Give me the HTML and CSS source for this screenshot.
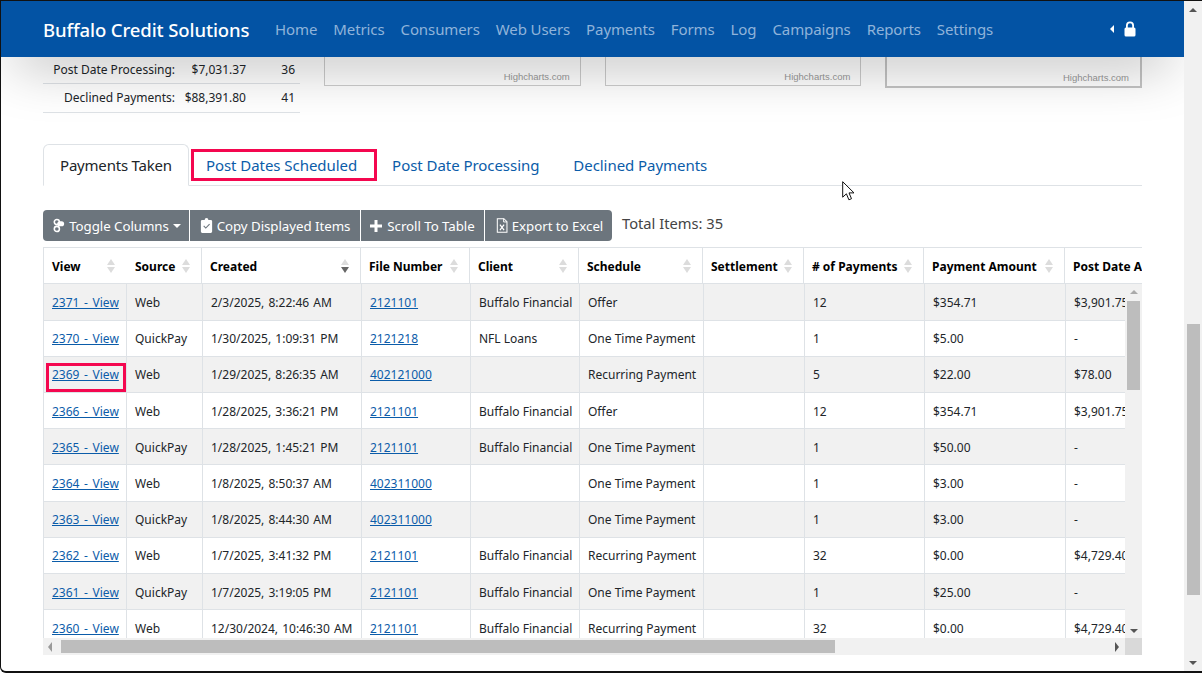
FILE: index.html
```html
<!DOCTYPE html>
<html lang="en">
<head>
<meta charset="utf-8">
<title>Buffalo Credit Solutions</title>
<link rel="stylesheet" href="styles.css">
</head>
<body>
<div class="window">
  <div class="viewport">
    <header class="topbar">
      <a class="brand" href="#">Buffalo Credit Solutions</a>
      <nav class="nav">
        <a href="#">Home</a><a href="#">Metrics</a><a href="#">Consumers</a><a href="#">Web Users</a><a href="#">Payments</a><a href="#">Forms</a><a href="#">Log</a><a href="#">Campaigns</a><a href="#">Reports</a><a href="#">Settings</a>
      </nav>
      <div class="userbox">
        <span class="caret-left"></span>
        <svg class="lock" viewBox="0 0 12 16" width="12" height="16"><path d="M2 7V4.5a4 4 0 0 1 8 0V7h-1.8V4.5a2.2 2.2 0 0 0-4.4 0V7z" fill="#fff"/><rect x="0.5" y="6.5" width="11" height="9" rx="1.5" fill="#fff"/></svg>
      </div>
    </header>
    <main class="page">
      <section class="summary">
        <table class="stats">
          <tr class="stats-first"><td class="s-label">Post Date Processing:</td><td class="s-amt">$7,031.37</td><td class="s-num">36</td></tr>
          <tr><td class="s-label">Declined Payments:</td><td class="s-amt">$88,391.80</td><td class="s-num">41</td></tr>
        </table>
        <div class="charts">
          <div class="chart"><span>Highcharts.com</span></div>
          <div class="chart"><span>Highcharts.com</span></div>
          <div class="chart chart-focus"><span>Highcharts.com</span></div>
        </div>
      </section>
      <ul class="tabs">
        <li class="tab active"><a href="#">Payments Taken</a></li>
        <li class="tab marked"><a href="#">Post Dates Scheduled</a></li>
        <li class="tab"><a href="#">Post Date Processing</a></li>
        <li class="tab"><a href="#">Declined Payments</a></li>
      </ul>
      <div class="toolbar">
        <div class="btn-group">
          <button class="btn b1"><svg viewBox="0 0 14 16" width="12" height="15"><circle cx="4.5" cy="4" r="3" fill="none" stroke="#fff" stroke-width="1.8"/><circle cx="4.5" cy="12" r="3" fill="none" stroke="#fff" stroke-width="1.8"/><rect x="5" y="3" width="8" height="6" rx="3" fill="#fff"/></svg>Toggle Columns<span class="caret-down"></span></button>
          <button class="btn b2"><svg viewBox="0 0 12 16" width="13" height="15"><path d="M1.5 2H4a2 2 0 0 1 4 0h2.5A1.5 1.5 0 0 1 12 3.5v11a1.5 1.5 0 0 1-1.5 1.5h-9A1.5 1.5 0 0 1 0 14.500v-11A1.500 1.500 0 0 1 1.500 2z" fill="#fff"/><path d="M3 8.500l2.200 2.200L9.300 6.500" fill="none" stroke="#6c757d" stroke-width="1.200"/></svg>Copy Displayed Items</button>
          <button class="btn b3"><svg viewBox="0 0 12 12" width="12" height="12"><path d="M4.500 0h3v4.500H12v3H7.500V12h-3V7.500H0v-3h4.500z" fill="#fff"/></svg>Scroll To Table</button>
          <button class="btn b4"><svg viewBox="0 0 12 16" width="12" height="15"><path d="M1 .7h7l3.300 3.300v11.300H1z" fill="none" stroke="#fff" stroke-width="1.100"/><path d="M7.700 .7v3.500h3.600" fill="none" stroke="#fff"/><path d="M3.800 7l4.400 6M8.200 7l-4.400 6" stroke="#fff" stroke-width="1.300"/></svg>Export to Excel</button>
        </div>
        <span class="total">Total Items: 35</span>
      </div>
      <div class="grid">
        <table class="head">
          <colgroup><col class="c1"><col class="c2"><col class="c3"><col class="c4"><col class="c5"><col class="c6"><col class="c7"><col class="c8"><col class="c9"><col class="c10"></colgroup>
          <tr>
            <th class="nosep"><div class="th">View<span class="sort"><i class="up"></i><i class="dn"></i></span></div></th>
            <th><div class="th">Source<span class="sort"><i class="up"></i><i class="dn"></i></span></div></th>
            <th><div class="th">Created<span class="sort"><i class="up"></i><i class="dn on"></i></span></div></th>
            <th><div class="th">File Number<span class="sort"><i class="up"></i><i class="dn"></i></span></div></th>
            <th><div class="th">Client<span class="sort"><i class="up"></i><i class="dn"></i></span></div></th>
            <th><div class="th">Schedule<span class="sort"><i class="up"></i><i class="dn"></i></span></div></th>
            <th><div class="th">Settlement<span class="sort"><i class="up"></i><i class="dn"></i></span></div></th>
            <th><div class="th"># of Payments<span class="sort"><i class="up"></i><i class="dn"></i></span></div></th>
            <th><div class="th">Payment Amount<span class="sort"><i class="up"></i><i class="dn"></i></span></div></th>
            <th><div class="th">Post Date Amount</div></th>
          </tr>
        </table>
        <div class="body-clip">
          <table class="rows">
            <colgroup><col class="d1"><col class="d2"><col class="d3"><col class="d4"><col class="d5"><col class="d6"><col class="d7"><col class="d8"><col class="d9"><col class="d10"></colgroup>
            <tr><td><a href="#">2371 - View</a></td><td>Web</td><td>2/3/2025, 8:22:46 AM</td><td><a href="#">2121101</a></td><td>Buffalo Financial</td><td>Offer</td><td></td><td>12</td><td>$354.71</td><td>$3,901.75</td></tr>
            <tr><td><a href="#">2370 - View</a></td><td>QuickPay</td><td>1/30/2025, 1:09:31 PM</td><td><a href="#">2121218</a></td><td>NFL Loans</td><td>One Time Payment</td><td></td><td>1</td><td>$5.00</td><td>-</td></tr>
            <tr><td><a class="marked-link" href="#">2369 - View</a></td><td>Web</td><td>1/29/2025, 8:26:35 AM</td><td><a href="#">402121000</a></td><td></td><td>Recurring Payment</td><td></td><td>5</td><td>$22.00</td><td>$78.00</td></tr>
            <tr><td><a href="#">2366 - View</a></td><td>Web</td><td>1/28/2025, 3:36:21 PM</td><td><a href="#">2121101</a></td><td>Buffalo Financial</td><td>Offer</td><td></td><td>12</td><td>$354.71</td><td>$3,901.75</td></tr>
            <tr><td><a href="#">2365 - View</a></td><td>QuickPay</td><td>1/28/2025, 1:45:21 PM</td><td><a href="#">2121101</a></td><td>Buffalo Financial</td><td>One Time Payment</td><td></td><td>1</td><td>$50.00</td><td>-</td></tr>
            <tr><td><a href="#">2364 - View</a></td><td>Web</td><td>1/8/2025, 8:50:37 AM</td><td><a href="#">402311000</a></td><td></td><td>One Time Payment</td><td></td><td>1</td><td>$3.00</td><td>-</td></tr>
            <tr><td><a href="#">2363 - View</a></td><td>QuickPay</td><td>1/8/2025, 8:44:30 AM</td><td><a href="#">402311000</a></td><td></td><td>One Time Payment</td><td></td><td>1</td><td>$3.00</td><td>-</td></tr>
            <tr><td><a href="#">2362 - View</a></td><td>Web</td><td>1/7/2025, 3:41:32 PM</td><td><a href="#">2121101</a></td><td>Buffalo Financial</td><td>Recurring Payment</td><td></td><td>32</td><td>$0.00</td><td>$4,729.40</td></tr>
            <tr><td><a href="#">2361 - View</a></td><td>QuickPay</td><td>1/7/2025, 3:19:05 PM</td><td><a href="#">2121101</a></td><td>Buffalo Financial</td><td>One Time Payment</td><td></td><td>1</td><td>$25.00</td><td>-</td></tr>
            <tr><td><a href="#">2360 - View</a></td><td>Web</td><td>12/30/2024, 10:46:30 AM</td><td><a href="#">2121101</a></td><td>Buffalo Financial</td><td>Recurring Payment</td><td></td><td>32</td><td>$0.00</td><td>$4,729.40</td></tr>
          </table>
          <div class="vbar"><span class="tri-up"></span><span class="vthumb"></span><span class="tri-down bar-end"></span></div>
        </div>
        <div class="hbar"><span class="tri-left"></span><span class="hthumb"></span><span class="tri-right"></span><span class="corner"></span></div>
      </div>
    </main>
    <svg class="pointer" viewBox="0 0 13 20" width="13" height="20"><path d="M.7.700v15.500l3.700-3.400 2.500 6 2.600-1.100-2.500-5.800h5z" fill="#fff" stroke="#111" stroke-width="1"/></svg>
  </div>
  <div class="page-scroll"><span class="tri-up"></span><span class="pthumb"></span><span class="tri-down bar-end"></span></div>
</div>
</body>
</html>
```
FILE: styles.css
```css
* { box-sizing: border-box; }
html, body { margin: 0; height: 673px; overflow: hidden; background: #fff; }
body { font-family: "Noto Sans", "Open Sans", sans-serif; color: #212529; }
a { text-decoration: none; }

.window { display: flex; width: 1202px; height: 673px; border: 1px solid #111; border-width: 1px 0 2px 1px; border-bottom-left-radius: 6px; overflow: hidden; }
.viewport { position: relative; flex: 1; height: 670px; overflow: hidden; }
.page-scroll { width: 18px; background: #f1f1f1; display: flex; flex-direction: column; align-items: center; padding: 7px 0 6px; }
.pthumb { width: 13px; height: 271px; background: #bdbdbd; margin-top: 312px; }
.bar-end { margin-top: auto; }
.tri-up { width: 0; height: 0; border: 4px solid transparent; border-top: 0; border-bottom: 4px solid #555; }
.tri-down { width: 0; height: 0; border: 4px solid transparent; border-bottom: 0; border-top: 4px solid #555; }
.tri-left { width: 0; height: 0; border: 5px solid transparent; border-left: 0; border-right: 4px solid #9a9a9a; }
.tri-right { width: 0; height: 0; border: 5px solid transparent; border-right: 0; border-left: 4px solid #555; }

.topbar { position: relative; z-index: 3; height: 56px; background: #0353a4; display: flex; align-items: center; padding: 0 42px; box-shadow: 0 18px 55px -14px rgba(0,0,0,.38); }
.brand { color: #fff; font-size: 18.5px; font-weight: 500; letter-spacing: -.1px; width: 232px; white-space: nowrap; }
.nav { display: flex; gap: 16px; font-size: 15px; letter-spacing: -.1px; }
.nav a { color: #90b3da; white-space: nowrap; }
.userbox { margin-left: auto; display: flex; align-items: center; gap: 10px; padding-right: 6px; }
.caret-left { width: 0; height: 0; border: 4px solid transparent; border-left: 0; border-right: 4px solid #fff; }
.lock { display: block; }

.page { padding: 0 42px; }
.summary { display: flex; gap: 24px; height: 87px; }
.stats { border-collapse: collapse; width: 257px; height: 55px; font-size: 12px; flex: none; }
.stats td { border-bottom: 1px solid #dee2e6; padding: 0; height: 29px; white-space: nowrap; }
.stats-first td { height: 26px; }
.s-label { text-align: right; width: 132px; }
.s-amt { text-align: right; width: 71px; }
.s-num { text-align: right; padding-right: 5px !important; }
.charts { flex: 1; display: grid; grid-template-columns: repeat(3, 1fr); gap: 24px; height: 31px; align-items: start; }
.chart { border: 1px solid #ccc; border-top: 0; display: flex; justify-content: flex-end; align-items: flex-end; padding: 0 10px 3px; height: 29px; font: 9.5px "Liberation Sans", sans-serif; color: #999; }
.chart-focus { border-width: 0 2px 2px; border-color: #c4c4c4; height: 31px; padding: 0 11px 3px; }

.tabs { display: flex; list-style: none; margin: 0; padding: 0; height: 42px; border-bottom: 1px solid #dee2e6; }
.tab { height: 42px; display: flex; }
.tab a { display: flex; align-items: center; padding: 0 16px; color: #0b5ca9; font-size: 15px; letter-spacing: -.05px; white-space: nowrap; border: 1px solid transparent; }
.tab.active a { color: #212529; background: #fff; border-color: #dee2e6 #dee2e6 #fff; border-radius: 6px 6px 0 0; height: 42px; letter-spacing: -.2px; }
.tab.marked { margin-left: 4px; }
.tab.marked a { outline: 3px solid #f4074f; outline-offset: -1px; height: 28px; margin-top: 7px; padding: 0 17px 0 12px; }

.toolbar { display: flex; align-items: flex-start; margin-top: 24px; gap: 10px; }
.btn-group { display: flex; gap: 1px; }
.btn { display: flex; align-items: center; justify-content: center; gap: 4px; height: 31px; border: 0; background: #6c757d; color: #fff; font: 13.3px "Noto Sans", sans-serif; letter-spacing: -.05px; padding: 0; white-space: nowrap; }
.b1 { width: 146px; border-radius: 4px 0 0 4px; padding-left: 2px; }
.b2 { width: 170px; }
.b3 { width: 123px; gap: 5px; }
.b4 { width: 127px; border-radius: 0 4px 4px 0; padding-left: 2px; }
.caret-down { width: 0; height: 0; border: 4px solid transparent; border-bottom: 0; border-top: 4px solid #fff; margin-left: 0; }
.total { font-size: 14.7px; color: #444; line-height: 26px; }

.grid { position: relative; width: 1099px; margin-top: 6px; height: 408px; overflow: hidden; }
.head, .rows { table-layout: fixed; border-collapse: collapse; font-size: 12px; }
.head { width: 1204px; background: #fff; }
.head th { height: 36px; padding: 1px 0 0; border: 1px solid #dee2e6; text-align: left; color: #000; font-weight: 700; white-space: nowrap; overflow: hidden; }
.head th.nosep { border-right-color: transparent; }
.th { display: flex; justify-content: space-between; align-items: center; padding: 0 11px 0 8px; }
.sort { display: flex; flex-direction: column; gap: 2px; flex: none; }
.sort i { display: block; width: 0; height: 0; border: 4px solid transparent; }
.sort .up { border-top: 0; border-bottom: 6px solid #dcdcdc; }
.sort .dn { border-bottom: 0; border-top: 6px solid #dcdcdc; }
.sort .dn.on { border-top-color: #666; }

.c1 { width: 83px; } .c2 { width: 75px; } .c3 { width: 159px; } .c4 { width: 109px; } .c5 { width: 109px; }
.c6 { width: 124px; } .c7 { width: 101px; } .c8 { width: 120px; } .c9 { width: 141px; } .c10 { width: 183px; }
.d1 { width: 83px; } .d2 { width: 76px; } .d3 { width: 159px; } .d4 { width: 109px; } .d5 { width: 109px; }
.d6 { width: 124px; } .d7 { width: 101px; } .d8 { width: 120px; } .d9 { width: 141px; } .d10 { width: 182px; }

.body-clip { position: relative; height: 354px; width: 1099px; overflow: hidden; }
.rows { width: 1204px; }
.rows td { height: 36.200px; padding: 1px 8px 0; border: 1px solid #dee2e6; border-top: 0; white-space: nowrap; overflow: hidden; color: #212529; }
.rows tr:nth-child(odd) { background: #f1f1f1; }
.rows a { color: #0b5ca9; text-decoration: underline; }
.rows td:first-child { overflow: visible; }
.rows td:first-child a { word-spacing: 1.5px; }
.rows td:nth-child(3) { word-spacing: 1px; }
.marked-link { display: inline-block; outline: 3px solid #f4074f; padding: 0 4px 6px 3px; margin: 0 -4px -6px -3px; }

.vbar { position: absolute; top: 0; right: 0; bottom: 0; width: 17px; display: flex; flex-direction: column; align-items: center; padding: 6px 0 5px; background: #f1f1f1; }
.vthumb { width: 13px; height: 89px; background: #bdbdbd; margin-top: 7px; }
.vbar .tri-up { border-bottom-color: #aaa; }
.hbar { display: flex; align-items: center; height: 17px; width: 1099px; background: #f1f1f1; padding-left: 5px; position: relative; }
.hthumb { width: 774px; height: 13px; background: #bdbdbd; margin-left: 9px; }
.tri-right { margin-left: auto; margin-right: 23px; }
.corner { position: absolute; right: 0; top: 0; width: 17px; height: 17px; background: #d9d9d9; }

.pointer { position: absolute; left: 841px; top: 180px; z-index: 5; }
```
